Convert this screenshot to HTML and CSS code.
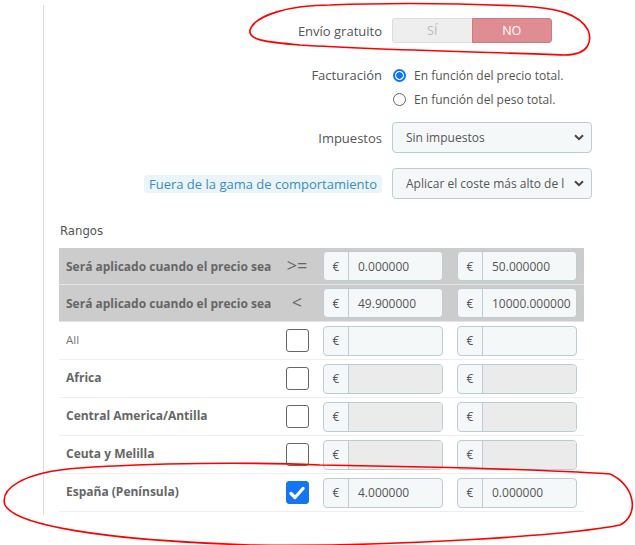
FILE: index.html
```html
<!DOCTYPE html>
<html lang="es">
<head>
<meta charset="utf-8">
<title>Transportista</title>
<link rel="stylesheet" href="styles.css">
</head>
<body>
<div class="page">
  <div class="panel">
    <div class="row row-toggle">
      <span class="lbl">Envío gratuito</span>
      <div class="toggle"><span class="opt off">SÍ</span><span class="opt on">NO</span></div>
    </div>
    <div class="row row-radio">
      <span class="lbl">Facturación</span>
      <div class="radios">
        <label class="radio"><span class="rb checked"></span>En función del precio total.</label>
        <label class="radio"><span class="rb"></span>En función del peso total.</label>
      </div>
    </div>
    <div class="row row-select">
      <span class="lbl">Impuestos</span>
      <div class="select"><span class="sel-text">Sin impuestos</span>
        <svg class="chev" width="10" height="7" viewBox="0 0 10 7"><path d="M1 1.2 L5 5.2 L9 1.2" fill="none" stroke="#444" stroke-width="2"/></svg>
      </div>
    </div>
    <div class="row row-select2">
      <span class="lbl"><span class="tip">Fuera de la gama de comportamiento</span></span>
      <div class="select"><span class="sel-text clip">Aplicar el coste más alto de los rangos definidos</span>
        <svg class="chev" width="10" height="7" viewBox="0 0 10 7"><path d="M1 1.2 L5 5.2 L9 1.2" fill="none" stroke="#444" stroke-width="2"/></svg>
      </div>
    </div>

    <div class="section-title">Rangos</div>

    <div class="ranges">
      <div class="tr head">
        <div class="td-label">Será aplicado cuando el precio sea</div>
        <div class="td-sym sym">&gt;=</div>
        <div class="ig"><span class="add">€</span><span class="val">0.000000</span></div>
        <div class="ig"><span class="add">€</span><span class="val">50.000000</span></div>
      </div>
      <div class="tr head">
        <div class="td-label">Será aplicado cuando el precio sea</div>
        <div class="td-sym sym">&lt;</div>
        <div class="ig"><span class="add">€</span><span class="val">49.900000</span></div>
        <div class="ig"><span class="add">€</span><span class="val">10000.000000</span></div>
      </div>
      <div class="tr">
        <div class="td-label light">All</div>
        <div class="td-sym"><span class="cb"></span></div>
        <div class="ig"><span class="add">€</span><span class="val"></span></div>
        <div class="ig"><span class="add">€</span><span class="val"></span></div>
      </div>
      <div class="tr">
        <div class="td-label">Africa</div>
        <div class="td-sym"><span class="cb"></span></div>
        <div class="ig dis"><span class="add">€</span><span class="val"></span></div>
        <div class="ig dis"><span class="add">€</span><span class="val"></span></div>
      </div>
      <div class="tr">
        <div class="td-label">Central America/Antilla</div>
        <div class="td-sym"><span class="cb"></span></div>
        <div class="ig dis"><span class="add">€</span><span class="val"></span></div>
        <div class="ig dis"><span class="add">€</span><span class="val"></span></div>
      </div>
      <div class="tr">
        <div class="td-label">Ceuta y Melilla</div>
        <div class="td-sym"><span class="cb"></span></div>
        <div class="ig dis"><span class="add">€</span><span class="val"></span></div>
        <div class="ig dis"><span class="add">€</span><span class="val"></span></div>
      </div>
      <div class="tr">
        <div class="td-label">España (Península)</div>
        <div class="td-sym"><span class="cb on"><svg width="16" height="14" viewBox="0 0 16 14"><path d="M2 7.5 L6 11.5 L14 2.5" fill="none" stroke="#fff" stroke-width="3.2" stroke-linecap="round" stroke-linejoin="round"/></svg></span></div>
        <div class="ig"><span class="add">€</span><span class="val">4.000000</span></div>
        <div class="ig"><span class="add">€</span><span class="val">0.000000</span></div>
      </div>
    </div>
  </div>

  <svg class="marks" width="635" height="545" viewBox="0 0 635 545">
    <path d="M330 5 C290 5 255 15 250 30 C248 40 265 42 300 45 C380 50 480 52 565 55 C590 55 592 40 588 30 C580 15 560 8 520 6 C450 3 380 3 330 5 Z" fill="none" stroke="#f00" stroke-width="1.6"/>
    <path d="M320 465 C250 462 150 463 80 468 C20 472 0 490 5 505 C15 525 100 540 250 545 C400 547 570 535 620 525 C640 515 635 485 610 474 C550 470 450 467 320 465 Z" fill="none" stroke="#f00" stroke-width="1.6"/>
  </svg>
</div>
</body>
</html>
```

FILE: styles.css
```css
* { box-sizing: border-box; }
body {
  margin: 0;
  font-family: "Open Sans", "Liberation Sans", sans-serif;
  font-size: 13px;
  color: #555;
  background: #fff;
}
.page {
  position: relative;
  width: 635px;
  height: 545px;
  overflow: hidden;
}
.panel {
  margin: 5px 0 0 43px;
  border-left: 1px solid #ddd;
  height: 510px;
}
.row {
  display: flex;
  align-items: center;
}
.lbl {
  width: 338px;
  margin-right: 10px;
  text-align: right;
  color: #555;
}
.row-toggle { padding-top: 13px; }
.toggle {
  display: flex;
  width: 160px;
  height: 25px;
  border-radius: 3px;
  overflow: hidden;
  font-size: 12.5px;
}
.opt {
  flex: 1;
  display: flex;
  align-items: center;
  justify-content: center;
}
.opt.off {
  background: #eee;
  color: #bbb;
  border: 1px solid #ddd;
  border-right: 0;
  border-radius: 3px 0 0 3px;
}
.opt.on {
  background: #e08c93;
  color: #fff;
  border: 1px solid #cf7880;
  border-radius: 0 3px 3px 0;
}
.row-radio {
  margin-top: 20px;
  align-items: flex-start;
}
.row-radio .lbl { line-height: 24px; }
.radios { display: flex; flex-direction: column; }
.radio {
  display: flex;
  align-items: center;
  height: 24px;
  font-size: 12px;
  color: #555;
}
.rb {
  width: 13px;
  height: 13px;
  border-radius: 50%;
  border: 1px solid #666;
  margin: 0 8px 0 1px;
  background: #fff;
}
.rb.checked {
  border: 2px solid #0a75ff;
  background: radial-gradient(circle, #0a75ff 0 3px, #fff 3.5px);
}
.row-select { margin-top: 11px; }
.row-select2 { margin-top: 15px; }
.select {
  width: 200px;
  height: 31px;
  border: 1px solid #bbcdd2;
  border-radius: 4px;
  background: #f5f8f9;
  display: flex;
  align-items: center;
  padding: 0 7px 0 13px;
  font-size: 12px;
  color: #555;
}
.sel-text { flex: 1; white-space: nowrap; overflow: hidden; }
.sel-text.clip { flex: none; width: 158px; margin-right: 10px; }
.chev { margin-left: auto; flex-shrink: 0; }
.tip {
  display: inline-block;
  background: #eaf4fb;
  color: #3b8cbc;
  padding: 0 5px;
  line-height: 18px;
  border-radius: 3px;
}
.section-title {
  margin: 23px 0 0 16px;
  font-family: "DejaVu Sans Condensed", "Liberation Sans Narrow", sans-serif;
  font-size: 13px;
  line-height: 18px;
  color: #555;
}
.ranges {
  margin: 8px 0 0 15px;
  width: 525px;
}
.tr {
  display: flex;
  align-items: center;
  height: 38px;
  border-bottom: 1px solid #eee;
}
.tr.head {
  background: #ccc;
  height: 37px;
  border-bottom: 1px solid #e4e4e4;
}
.td-label {
  width: 220px;
  padding-left: 7px;
  padding-bottom: 2px;
  font-weight: 700;
  font-size: 12px;
  color: #666;
  white-space: nowrap;
}
.tr.head .td-label { padding-bottom: 0; }
.td-label.light { font-weight: 400; color: #777; font-size: 11.5px; }
.td-sym {
  width: 36px;
  display: flex;
  justify-content: center;
  align-items: center;
}
.sym { font-size: 18px; color: #666; font-weight: 400; padding-bottom: 2px; }
.cb {
  width: 23px;
  height: 23px;
  border: 1.5px solid #666;
  border-radius: 3px;
  background: #fff;
  display: flex;
  align-items: center;
  justify-content: center;
}
.cb.on { background: #1476f2; border-color: #1476f2; }
.ig {
  width: 120px;
  height: 30px;
  margin-left: 8px;
  display: flex;
  border: 1px solid #bbcdd2;
  border-radius: 4px;
  overflow: hidden;
  background: #f5f8f9;
}
.ig + .ig { margin-left: 14px; }
.add {
  width: 25px;
  border-right: 1px solid #bbcdd2;
  display: flex;
  align-items: center;
  justify-content: center;
  font-size: 12px;
  color: #555;
}
.val {
  flex: 1;
  display: flex;
  align-items: center;
  padding-left: 9px;
  font-size: 12px;
  color: #555;
  white-space: nowrap;
  overflow: hidden;
}
.ig.dis .val { background: #ebebeb; }
.marks {
  position: absolute;
  left: 0;
  top: 0;
  pointer-events: none;
}
```
